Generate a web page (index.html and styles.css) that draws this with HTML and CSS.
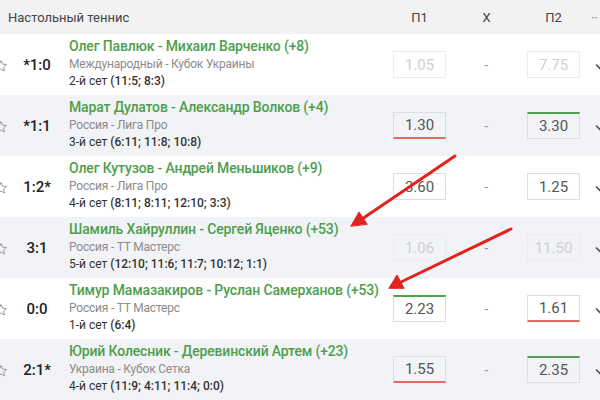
FILE: index.html
```html
<!DOCTYPE html>
<html lang="ru">
<head>
<meta charset="utf-8">
<title>Настольный теннис</title>
<link rel="stylesheet" href="styles.css">
</head>
<body>
<div class="page">
  <div class="head grid">
    <div class="title">Настольный теннис</div>
    <div class="hcol">П1</div>
    <div class="hcol">X</div>
    <div class="hcol">П2</div>
    <div class="hcol more">··</div>
  </div>

  <div class="row grid">
    <div class="star"><svg viewBox="0 0 14 14" width="14" height="14"><path d="M7 1.5l1.6 3.6 3.9.4-2.9 2.6.8 3.9L7 10l-3.4 2 .8-3.9L1.5 5.5l3.9-.4z" fill="none" stroke="#9a9a9a" stroke-width="1"/></svg></div>
    <div class="score">*1:0</div>
    <div class="info">
      <div class="teams">Олег Павлюк - Михаил Варченко (+8)</div>
      <div class="league">Международный - Кубок Украины</div>
      <div class="set">2-й сет <b>(11:5; 8:3)</b></div>
    </div>
    <div class="odd off">1.05</div>
    <div class="dash">-</div>
    <div class="odd off">7.75</div>
    <div class="chev"><svg viewBox="0 0 12 8" width="12" height="8"><path d="M1 1.5l5 5 5-5" fill="none" stroke="#555" stroke-width="1.6"/></svg></div>
  </div>

  <div class="row grid alt">
    <div class="star"><svg viewBox="0 0 14 14" width="14" height="14"><path d="M7 1.5l1.6 3.6 3.9.4-2.9 2.6.8 3.9L7 10l-3.4 2 .8-3.9L1.5 5.5l3.9-.4z" fill="none" stroke="#9a9a9a" stroke-width="1"/></svg></div>
    <div class="score">*1:1</div>
    <div class="info">
      <div class="teams">Марат Дулатов - Александр Волков (+4)</div>
      <div class="league">Россия - Лига Про</div>
      <div class="set">3-й сет <b>(6:11; 11:8; 10:8)</b></div>
    </div>
    <div class="odd down">1.30</div>
    <div class="dash">-</div>
    <div class="odd up">3.30</div>
    <div class="chev"><svg viewBox="0 0 12 8" width="12" height="8"><path d="M1 1.5l5 5 5-5" fill="none" stroke="#555" stroke-width="1.6"/></svg></div>
  </div>

  <div class="row grid">
    <div class="star"><svg viewBox="0 0 14 14" width="14" height="14"><path d="M7 1.5l1.6 3.6 3.9.4-2.9 2.6.8 3.9L7 10l-3.4 2 .8-3.9L1.5 5.5l3.9-.4z" fill="none" stroke="#9a9a9a" stroke-width="1"/></svg></div>
    <div class="score">1:2*</div>
    <div class="info">
      <div class="teams">Олег Кутузов - Андрей Меньшиков (+9)</div>
      <div class="league">Россия - Лига Про</div>
      <div class="set">4-й сет <b>(8:11; 8:11; 12:10; 3:3)</b></div>
    </div>
    <div class="odd">3.60</div>
    <div class="dash">-</div>
    <div class="odd">1.25</div>
    <div class="chev"><svg viewBox="0 0 12 8" width="12" height="8"><path d="M1 1.5l5 5 5-5" fill="none" stroke="#555" stroke-width="1.6"/></svg></div>
  </div>

  <div class="row grid alt">
    <div class="star"><svg viewBox="0 0 14 14" width="14" height="14"><path d="M7 1.5l1.6 3.6 3.9.4-2.9 2.6.8 3.9L7 10l-3.4 2 .8-3.9L1.5 5.5l3.9-.4z" fill="none" stroke="#9a9a9a" stroke-width="1"/></svg></div>
    <div class="score">3:1</div>
    <div class="info">
      <div class="teams">Шамиль Хайруллин - Сергей Яценко (+53)</div>
      <div class="league">Россия - ТТ Мастерс</div>
      <div class="set">5-й сет <b>(12:10; 11:6; 11:7; 10:12; 1:1)</b></div>
    </div>
    <div class="odd off">1.06</div>
    <div class="dash">-</div>
    <div class="odd off">11.50</div>
    <div class="chev"><svg viewBox="0 0 12 8" width="12" height="8"><path d="M1 1.5l5 5 5-5" fill="none" stroke="#555" stroke-width="1.6"/></svg></div>
  </div>

  <div class="row grid">
    <div class="star"><svg viewBox="0 0 14 14" width="14" height="14"><path d="M7 1.5l1.6 3.6 3.9.4-2.9 2.6.8 3.9L7 10l-3.4 2 .8-3.9L1.5 5.5l3.9-.4z" fill="none" stroke="#9a9a9a" stroke-width="1"/></svg></div>
    <div class="score">0:0</div>
    <div class="info">
      <div class="teams">Тимур Мамазакиров - Руслан Самерханов (+53)</div>
      <div class="league">Россия - ТТ Мастерс</div>
      <div class="set">1-й сет <b>(6:4)</b></div>
    </div>
    <div class="odd up">2.23</div>
    <div class="dash">-</div>
    <div class="odd down">1.61</div>
    <div class="chev"><svg viewBox="0 0 12 8" width="12" height="8"><path d="M1 1.5l5 5 5-5" fill="none" stroke="#555" stroke-width="1.6"/></svg></div>
  </div>

  <div class="row grid alt">
    <div class="star"><svg viewBox="0 0 14 14" width="14" height="14"><path d="M7 1.5l1.6 3.6 3.9.4-2.9 2.6.8 3.9L7 10l-3.4 2 .8-3.9L1.5 5.5l3.9-.4z" fill="none" stroke="#9a9a9a" stroke-width="1"/></svg></div>
    <div class="score">2:1*</div>
    <div class="info">
      <div class="teams">Юрий Колесник - Деревинский Артем (+23)</div>
      <div class="league">Украина - Кубок Сетка</div>
      <div class="set">4-й сет <b>(11:9; 4:11; 11:4; 0:0)</b></div>
    </div>
    <div class="odd down">1.55</div>
    <div class="dash">-</div>
    <div class="odd up">2.35</div>
    <div class="chev"><svg viewBox="0 0 12 8" width="12" height="8"><path d="M1 1.5l5 5 5-5" fill="none" stroke="#555" stroke-width="1.6"/></svg></div>
  </div>

  <svg class="arrows" viewBox="0 0 600 400" width="600" height="400">
    <g stroke="#e2231d" stroke-width="3" stroke-linecap="round" fill="#e2231d">
      <line x1="455" y1="156" x2="362" y2="219"/>
      <polygon points="351,226 359,212 367,224" stroke-width="1"/>
      <line x1="511" y1="229" x2="401" y2="282"/>
      <polygon points="389,288 397,275 404,288" stroke-width="1"/>
    </g>
  </svg>
</div>
</body>
</html>
```

FILE: styles.css
```css
html, body {
  margin: 0;
  padding: 0;
  background: #fff;
}
body {
  font-family: Roboto, "Liberation Sans", Arial, sans-serif;
  color: #333;
  overflow: hidden;
}
.page {
  position: relative;
  width: 600px;
  height: 400px;
  overflow: hidden;
}
.grid {
  display: grid;
  grid-template-columns: 14px 46px 1fr 53px 81px 53px 20px;
  align-items: center;
}
.head {
  height: 34px;
  background: #f2f2f2;
  font-size: 13px;
  color: #444;
}
.title {
  grid-column: 1 / 4;
  padding-left: 8px;
}
.hcol {
  text-align: center;
}
.more {
  text-align: right;
  margin-right: 2px;
  color: #777;
}
.row {
  height: 61px;
  background: #fff;
}
.row.alt {
  background: #f1f3f6;
}
.star {
  display: flex;
  margin-left: -6px;
  padding-top: 2px;
}
.score {
  text-align: center;
  font-size: 15px;
  color: #222;
  font-weight: 500;
}
.info {
  padding-left: 9px;
  display: flex;
  flex-direction: column;
  line-height: 17.5px;
  white-space: nowrap;
}
.teams {
  color: #4e9e4e;
  font-size: 14px;
  font-weight: 500;
  letter-spacing: -0.15px;
}
.league {
  color: #8c8c8c;
  font-size: 12px;
  letter-spacing: -0.2px;
}
.set {
  color: #333;
  font-size: 12px;
}
.set b {
  font-weight: 500;
}
.odd {
  height: 27px;
  box-sizing: border-box;
  border: 1px solid #dedede;
  display: flex;
  align-items: center;
  justify-content: center;
  font-size: 15px;
  color: #555;
}
.odd.off {
  color: #cfcfcf;
  border-color: #ececec;
}
.odd.down {
  border-bottom: 2px solid #e46a62;
}
.odd.up {
  border-top: 2px solid #4f9f4f;
}
.dash {
  text-align: center;
  color: #999;
  font-size: 14px;
}
.chev {
  display: flex;
  justify-content: flex-end;
  margin-right: -7px;
  padding-top: 4px;
}
.arrows {
  position: absolute;
  left: 0;
  top: 0;
  pointer-events: none;
}
```
